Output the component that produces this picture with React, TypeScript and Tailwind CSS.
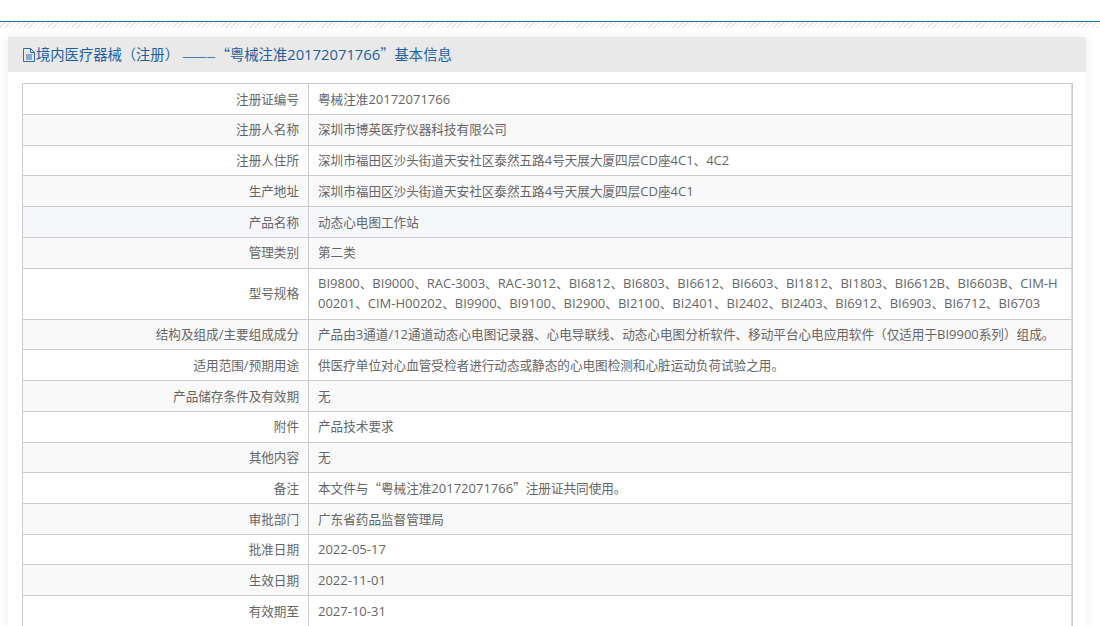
const ROWS: { label: string; value: string; bg?: string }[] = [
  { label: "注册证编号", value: "粤械注准20172071766" },
  { label: "注册人名称", value: "深圳市博英医疗仪器科技有限公司" },
  { label: "注册人住所", value: "深圳市福田区沙头街道天安社区泰然五路4号天展大厦四层CD座4C1、4C2" },
  { label: "生产地址", value: "深圳市福田区沙头街道天安社区泰然五路4号天展大厦四层CD座4C1" },
  { label: "产品名称", value: "动态心电图工作站", bg: "bg-[#f5f7fa]" },
  { label: "管理类别", value: "第二类" },
  {
    label: "型号规格",
    value:
      "BI9800、BI9000、RAC-3003、RAC-3012、BI6812、BI6803、BI6612、BI6603、BI1812、BI1803、BI6612B、BI6603B、CIM-H00201、CIM-H00202、BI9900、BI9100、BI2900、BI2100、BI2401、BI2402、BI2403、BI6912、BI6903、BI6712、BI6703",
  },
  { label: "结构及组成/主要组成成分", value: "产品由3通道/12通道动态心电图记录器、心电导联线、动态心电图分析软件、移动平台心电应用软件（仅适用于BI9900系列）组成。" },
  { label: "适用范围/预期用途", value: "供医疗单位对心血管受检者进行动态或静态的心电图检测和心脏运动负荷试验之用。" },
  { label: "产品储存条件及有效期", value: "无" },
  { label: "附件", value: "产品技术要求" },
  { label: "其他内容", value: "无" },
  { label: "备注", value: "本文件与“粤械注准20172071766”注册证共同使用。" },
  { label: "审批部门", value: "广东省药品监督管理局" },
  { label: "批准日期", value: "2022-05-17" },
  { label: "生效日期", value: "2022-11-01" },
  { label: "有效期至", value: "2027-10-31" },
];

// latin runs sit a touch larger than the CJK around them
function Mixed({ text, latin }: { text: string; latin: string }) {
  return (
    <>
      {text.split(/([A-Za-z\-/]+|[0-9]+)/).map((part, i) =>
        i % 2 === 1 ? (
          <span key={i} className={`font-['Open_Sans',sans-serif] ${latin}`}>
            {part}
          </span>
        ) : (
          part
        ),
      )}
    </>
  );
}

function FileIcon() {
  return (
    <svg width="12" height="14" viewBox="0 0 12 14" fill="none" stroke="#2a6cb0" strokeWidth="1" className="shrink-0">
      <path d="M.5 .5h7l4 4v9h-11z" />
      <path d="M7.500 .5v4h4M3 7h6M3 9h6M3 11h6" />
    </svg>
  );
}

export default function App() {
  return (
    <div className="h-[626px] overflow-hidden bg-white font-['Noto_Sans_CJK_SC',sans-serif] text-[12.6px] text-[#666]">
      <div className="h-[21px]" />
      <div className="h-px bg-[#1c6ea4]" />
      <div className="h-[6px] bg-[repeating-linear-gradient(135deg,#e4e4e4,#e4e4e4_1px,#fff_1px,#fff_3.4px)]" />
      <div className="mt-[9px] ml-2 w-[1078px] bg-white shadow-[0_0_10px_rgba(0,0,0,0.08)]">
        <div className="flex h-[35px] items-center gap-px bg-[#e9e9e9] pl-[15px] text-[14.3px] text-[#1f5f9f]">
          <FileIcon />
          <span>
            境内医疗器械（注册） <span className="text-[10px]">————</span>
            <Mixed text="“粤械注准20172071766”基本信息" latin="text-[14.8px]" />
          </span>
        </div>
        <div className="px-[14px] pt-[11.3px]">
          <table className="w-[1051px] table-fixed border-separate border-spacing-0 border-t border-l border-r border-[#ccc]">
            <colgroup>
              <col className="w-[286px]" />
              <col />
            </colgroup>
            <tbody>
              {ROWS.map((r, i) => (
                <tr key={r.label} className={r.bg ?? (i % 2 === 1 ? "bg-[#f9f9f9]" : "bg-white")}>
                  <td className="border-r border-b border-[#ccc] px-[9px] pt-[4.46px] pb-[4.86px] text-right leading-[20.4px]">
                    <Mixed text={r.label} latin="text-[13px]" />
                  </td>
                  <td className="border-r border-b border-[#ddd] border-b-[#ccc] px-[9px] pt-[4.46px] pb-[4.86px] leading-[20.4px] break-all">
                    <Mixed text={r.value} latin="text-[13px]" />
                  </td>
                </tr>
              ))}
            </tbody>
          </table>
        </div>
      </div>
    </div>
  );
}
